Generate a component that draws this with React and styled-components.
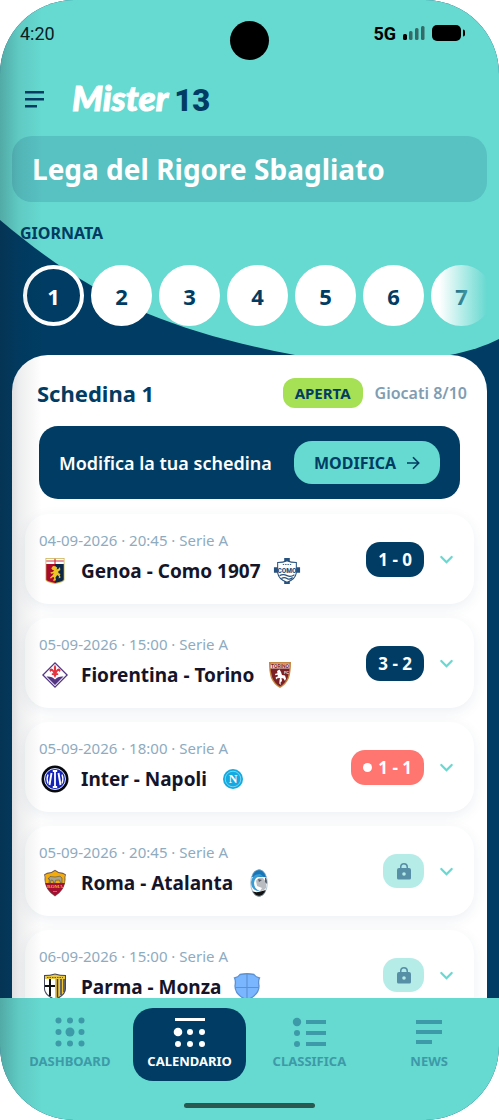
import React, { useState } from 'react';
import styled, { createGlobalStyle } from 'styled-components';

const TEAL = '#66d9d0';
const NAVY = '#003c63';
const MUTED = '#3d9aa8';

const GlobalStyle = createGlobalStyle`
	* {
		box-sizing: border-box;
	}
	body {
		margin: 0;
		background: #fff;
		font-family: 'Noto Sans', 'Open Sans', sans-serif;
	}
	button {
		font-family: inherit;
		border: 0;
		padding: 0;
		cursor: pointer;
	}
`;

const Screen = styled.div`
	position: relative;
	display: flex;
	flex-direction: column;
	height: 100vh;
	border-radius: 74px;
	overflow: hidden;
	background: ${NAVY};
	isolation: isolate;
`;

// soft shade running down the left side of the screen
const EdgeShade = styled.div`
	position: absolute;
	inset: 0 auto 0 0;
	width: 42px;
	z-index: 5;
	pointer-events: none;
	background: linear-gradient(to right, rgba(20, 30, 40, 0.25), rgba(20, 30, 40, 0.08) 45%, rgba(20, 30, 40, 0));
`;

const Backdrop = styled.svg`
	position: absolute;
	top: 0;
	left: 0;
	width: 100%;
	height: 364px;
	z-index: -1;
`;

const StatusBar = styled.div`
	position: relative;
	display: flex;
	flex: none;
	align-items: center;
	justify-content: space-between;
	height: 66px;
	padding: 0 34px 0 20px;
	font-family: Roboto, sans-serif;
	font-size: 18px;
	color: #06201f;
`;

const Camera = styled.span`
	position: absolute;
	top: 21px;
	left: 50%;
	width: 39px;
	height: 39px;
	margin-left: -20px;
	border-radius: 50%;
	background: #000;
`;

const StatusIcons = styled.div`
	display: flex;
	align-items: center;
	gap: 7px;
	color: #000;

	b {
		font-size: 18px;
		font-weight: 700;
	}
`;

const Header = styled.header`
	display: flex;
	flex: none;
	align-items: center;
	gap: 26px;
	height: 66px;
	margin-bottom: 4px;
	padding: 0 22px;
`;

const MenuButton = styled.button`
	display: flex;
	background: none;
`;

const Logo = styled.h1`
	display: flex;
	align-items: baseline;
	gap: 6px;
	margin: 0;
	font-family: Lato, sans-serif;
	font-size: 35px;
	line-height: 40px;
	font-weight: 900;
	font-style: italic;
	color: #fff;
	-webkit-text-stroke: 1px currentColor;

	span {
		font-family: 'Liberation Sans Narrow', Roboto, sans-serif;
		font-size: 31px;
		font-style: normal;
		color: ${NAVY};
		-webkit-text-stroke: 0;
	}
`;

const League = styled.h2`
	flex: none;
	margin: 0 12px;
	padding: 0 20px;
	border-radius: 20px;
	background: #58c1c2;
	color: #fff;
	font-size: 28px;
	line-height: 66px;
	font-weight: 700;
`;

const SectionLabel = styled.h3`
	flex: none;
	margin: 20px 20px 0;
	color: ${NAVY};
	font-size: 16px;
	line-height: 22px;
	font-weight: 700;
`;

const Days = styled.div`
	position: relative;
	display: flex;
	flex: none;
	gap: 7px;
	margin: 21px 12px 0;
	padding-left: 11px;
	overflow: hidden;

	&::after {
		content: '';
		position: absolute;
		inset: 0 0 0 auto;
		width: 48px;
		background: linear-gradient(to right, rgba(102, 217, 208, 0), ${TEAL});
	}
`;

const Day = styled.button`
	flex: none;
	width: 61px;
	height: 61px;
	border-radius: 50%;
	border: 4px solid #fff;
	background: ${props => (props.$active ? NAVY : '#fff')};
	color: ${props => (props.$active ? '#fff' : NAVY)};
	font-size: 22px;
	font-weight: 700;
`;

const Card = styled.main`
	display: flex;
	flex: 1;
	flex-direction: column;
	min-height: 0;
	margin: 29px 12px 0;
	padding: 23px 13px 0;
	border-radius: 36px 36px 0 0;
	background: #fff;
	overflow: hidden;
`;

const CardHeader = styled.div`
	display: flex;
	flex: none;
	align-items: center;
	gap: 12px;
	padding: 0 7px 0 12px;
	color: ${NAVY};
`;

const CardTitle = styled.h2`
	flex: 1;
	margin: 0;
	font-size: 22px;
	line-height: 30px;
	font-weight: 700;
`;

const Badge = styled.span`
	padding: 0 12px;
	border-radius: 12px;
	background: #a5e055;
	font-size: 15px;
	line-height: 30px;
	font-weight: 700;
`;

const Played = styled.span`
	color: #7f9db3;
	font-size: 16px;
	font-weight: 600;
`;

const Banner = styled.section`
	display: flex;
	flex: none;
	align-items: center;
	justify-content: space-between;
	height: 73px;
	margin: 18px 14px 0;
	padding: 0 20px;
	border-radius: 19px;
	background: ${NAVY};
	color: #fff;
	font-size: 18px;
	font-weight: 600;
`;

const EditButton = styled.button`
	display: flex;
	align-items: center;
	gap: 10px;
	height: 43px;
	padding: 0 20px;
	border-radius: 18px;
	background: ${TEAL};
	color: ${NAVY};
	font-size: 16px;
	font-weight: 700;
`;

const MatchList = styled.ul`
	display: flex;
	flex: 1;
	flex-direction: column;
	gap: 14px;
	min-height: 0;
	margin: 0 -13px;
	padding: 15px 13px;
	list-style: none;
	overflow-y: auto;
	scrollbar-width: none;
`;

const Match = styled.li`
	display: flex;
	flex: none;
	align-items: center;
	height: 90px;
	padding: 0 20px 0 14px;
	border-radius: 24px;
	background: #fff;
	box-shadow: 0 4px 14px rgba(0, 60, 99, 0.08);
`;

const MatchInfo = styled.div`
	flex: 1;
	padding-bottom: 2px;
`;

const MatchDate = styled.div`
	color: #8eabc0;
	font-size: 15px;
	line-height: 20px;
`;

const Teams = styled.div`
	display: flex;
	align-items: center;
	gap: 12px;
	margin-top: 6px;
	padding-left: 2px;
	color: #15152a;
	font-size: 19px;
	line-height: 30px;
	font-weight: 700;
	white-space: nowrap;

	svg {
		flex: none;
	}
`;

const Score = styled.span`
	display: flex;
	align-items: center;
	gap: 6px;
	height: 35px;
	padding: 0 12px;
	border-radius: 14px;
	background: ${props => (props.$live ? '#ff756f' : NAVY)};
	color: #fff;
	font-size: 17px;
	font-weight: 700;
`;

const LiveDot = styled.i`
	width: 9px;
	height: 9px;
	border-radius: 50%;
	background: #fff;
`;

const Locked = styled.span`
	display: flex;
	align-items: center;
	justify-content: center;
	width: 41px;
	height: 34px;
	border-radius: 14px;
	background: #b5ece8;
`;

const ExpandButton = styled.button`
	display: flex;
	margin-left: 15px;
	background: none;
`;

const TabBar = styled.nav`
	flex: none;
	padding: 10px 10px 12px;
	background: ${TEAL};
`;

const Tabs = styled.div`
	display: grid;
	grid-template-columns: repeat(4, 1fr);
	justify-items: center;
`;

const Tab = styled.a`
	display: flex;
	flex-direction: column;
	align-items: center;
	gap: 4px;
	width: 113px;
	height: 73px;
	padding-top: 8px;
	border-radius: 20px;
	background: ${props => (props.$active ? NAVY : 'transparent')};
	color: ${props => (props.$active ? '#fff' : MUTED)};
	font-size: 13px;
	line-height: 18px;
	font-weight: 700;
	text-decoration: none;
`;

const HomeBar = styled.div`
	width: 131px;
	height: 5px;
	margin: 22px auto 0;
	border-radius: 3px;
	background: #28584f;
`;

const MenuIcon = () => (
	<svg width="24" height="24" viewBox="0 0 24 24" fill={NAVY}>
		<path d="M3 4h19v2.500H3zM3 11h19v2.500H3zM3 18h12v2.500H3z" />
	</svg>
);

const SignalIcon = () => (
	<svg width="22" height="16" viewBox="0 0 22 16">
		<rect x="0" y="9" width="4" height="6" rx="1.500" />
		<g opacity="0.5">
			<rect x="6" y="6" width="3.500" height="9" rx="1.500" />
			<rect x="12" y="3" width="3.500" height="12" rx="1.500" />
			<rect x="18" y="1" width="3.500" height="14" rx="1.500" />
		</g>
	</svg>
);

const BatteryIcon = () => (
	<svg width="33" height="16" viewBox="0 0 33 16">
		<rect width="29" height="16" rx="5" />
		<path d="M31 4.500q2 0 2 2v3q0 2-2 2z" />
	</svg>
);

const ArrowIcon = () => (
	<svg width="14" height="14" viewBox="0 0 14 14" fill="none" stroke={NAVY} strokeWidth="1.600">
		<path d="M1 7h11.500M7 1.300 12.700 7 7 12.700" />
	</svg>
);

const ChevronIcon = () => (
	<svg width="15" height="15" viewBox="0 0 15 15" fill="none" stroke={TEAL} strokeWidth="2.200" strokeLinecap="round">
		<path d="M2.300 5 7.500 10.200 12.700 5" />
	</svg>
);

const LockIcon = () => (
	<svg width="14" height="18" viewBox="0 0 14 18" fill="#568fa6">
		<path d="M2 6H3V5a4 4 0 0 1 8 0v1h1a2 2 0 0 1 2 2v8a1.500 1.500 0 0 1-1.500 1.500h-11A1.500 1.500 0 0 1 0 16V8a2 2 0 0 1 2-2zm2.500 0h5V5a2.500 2.500 0 0 0-5 0z" />
		<circle cx="7" cy="12" r="1.800" fill="#b5ece8" />
	</svg>
);

const CREST = { width: 28, height: 28, viewBox: '0 0 28 28', 'aria-hidden': true };

const crests = {
	genoa: (
		<svg {...CREST}>
			<path d="M4.500 1h19v22q0 2-9.500 4-9.500-2-9.500-4z" fill="#cdb553" />
			<path d="M5.300 7H14v19q-8.700-2-8.700-3.500z" fill="#a80a2d" />
			<path d="M14 7h8.700v15.500Q22.700 24 14 26z" fill="#0c2748" />
			<path d="M5.300 1.800h17.400V7H5.300z" fill="#fff" />
			<path d="M5.300 4h17.400M14 1.800V7" stroke="#d52e45" strokeWidth="1.200" />
			<path d="m12 9 2.500.3 1.800 1.500-.8 1.700 2-.7 1.500-1.800.3 3-2.300 1.800.8 1.500 1.700.7-.8 1.500 1 1.800-2 1.200.3-2-1.700-1.500-1.800 2.500.5 2.700-2.500.8-.3-1.200 1-.8-.3-2-2 .5-1 1.300-.8-1.300 2.500-2.200 1.200-2-2.700.4-.8-1.200 2.600-.8 1.400-1.200-2-.7-1-1.500z" fill="#edc526" />
		</svg>
	),
	como: (
		<svg {...CREST} viewBox="-1 0 30 28">
			<path d="M11 0h6v5h-6zM0 10h28v6H0zM11 23h6v5h-6z" fill="#26517e" />
			<path d="M4 5q6 0 10-2 4 2 10 2v11q-1 7-10 10Q5 23 4 16z" fill="#fff" stroke="#26517e" strokeWidth="1.100" />
			<path d="M9.500 7h9" stroke="#26517e" strokeDasharray="1.500 1" />
			<text x="14" y="16" textAnchor="middle" fontFamily="Roboto, sans-serif" fontSize="7" fontWeight="900" fill="#26517e">COMO</text>
			<path d="M6 19q4-2 8 0t8-1M8 22q3-2 6 0t6-1" fill="none" stroke="#26517e" strokeWidth="1.300" />
		</svg>
	),
	fiorentina: (
		<svg {...CREST}>
			<path d="m14 1 13 13-13 13L1 14z" fill="#533584" />
			<path d="m14 2.800 11.200 11.200L14 25.200 2.800 14z" fill="#fff" />
			<path d="M5.500 15.500q5.500-.5 8.500 3 3-3.500 8.500-3L14 24z" fill="#533584" />
			<path d="M14 3.500q2 2.500 1 6 2-3 4-1.500 1.500 1.500-1 3.500 1-2-1-1.500l-1.500 2.300h1.700v1.700h-1.700l-1.500 3-1.500-3h-1.700v-1.700h1.700L11 10q-2-.5-1 1.500-2.500-2-1-3.500 2-1.500 4 1.500-1-3.500 1-6z" fill="#e33540" />
		</svg>
	),
	torino: (
		<svg {...CREST}>
			<path d="M3 1h22q0 10-2 16-3 7-9 10-6-3-9-10Q3 11 3 1z" fill="#c48640" />
			<path d="M4.300 2.500h19.400q0 8-2 14-2.500 6-7.700 9-5.200-3-7.700-9-2-6-2-14z" fill="#7b2025" />
			<path d="M4.500 2.500h19v5h-19z" fill="#eee2d8" />
			<text x="14" y="6.900" textAnchor="middle" fontFamily="Roboto, sans-serif" fontSize="5" fontWeight="700" fill="#7b2025">TORINO</text>
			<text x="20.500" y="13" textAnchor="middle" fontFamily="Roboto, sans-serif" fontSize="4" fontWeight="700" fill="#eee2d8">FC</text>
			<path d="m11 10 2.500-1.500 1.500 2.500 1 3 3 .5 1 3-1 2.500-1.500-2.500-2-.5.5 3-1.500 1.500.3 2.500-1.500-1.500.2-3 .5-2.500-2.500.3-1.500 1.200-.3-2.200 2.300-1-.5-1.500-2.500.5.3-1.500 2.200-.5z" fill="#fff" />
		</svg>
	),
	inter: (
		<svg {...CREST}>
			<circle cx="14" cy="14" r="13.500" fill="#08090e" />
			<circle cx="14" cy="14" r="10.500" fill="#1423b8" stroke="#dfe6ff" strokeWidth="1" />
			<path d="M11.800 6h4.400M11.800 22h4.400M14 6v16" stroke="#fff" strokeWidth="1.800" fill="none" />
			<path d="M7 9.500q-1.800 4.500 0 9M21 9.500q1.800 4.500 0 9" stroke="#fff" strokeWidth="1.300" fill="none" />
			<path d="m10.500 8-2 12M17.500 8l2 12" stroke="#fff" strokeWidth="1.900" fill="none" />
		</svg>
	),
	napoli: (
		<svg {...CREST}>
			<circle cx="14" cy="14" r="10" fill="#12aae1" />
			<circle cx="14" cy="14" r="7.800" fill="none" stroke="#78d1f0" />
			<text x="14" y="18" textAnchor="middle" fontFamily="'Liberation Serif', serif" fontSize="12" fontWeight="700" fill="#fff">N</text>
		</svg>
	),
	roma: (
		<svg {...CREST}>
			<path d="M14 .8q3 2.800 8 3l3 1.700q-1 2.500-.5 5 0 10-10.500 17Q3.500 20.500 3.500 10.500 4 8 3 5.500l3-1.700q5-.2 8-3z" fill="#715b52" />
			<path d="M14 2q3 2.700 8 3l2 1q-.7 2-.5 4.500V14h-19v-3.500Q4.700 8 4 6l2-1q5-.3 8-3z" fill="#f3ac0c" />
			<path d="M4.500 14h19Q22 22 14 26.500 6 22 4.500 14z" fill="#a40f31" />
			<path d="m7 10 2-2.500 5 .5 5-.8 2 1.800v5h-1.500l-1-3-4 .3-.5 2.700h-1.500l-.5-2.500-2-.5-.5 3H8l.5-4z" fill="#a6a392" stroke="#59533d" strokeWidth=".6" />
			<text x="14" y="19" textAnchor="middle" fontFamily="'Liberation Serif', serif" fontSize="5" fontWeight="700" fill="#f0b32b">ROMA</text>
			<path d="M12 22.500h4" stroke="#d88245" strokeWidth=".8" />
		</svg>
	),
	atalanta: (
		<svg {...CREST}>
			<clipPath id="atalanta-oval">
				<ellipse cx="14" cy="14" rx="8.500" ry="13.500" />
			</clipPath>
			<g clipPath="url(#atalanta-oval)">
				<path d="M0 0h28v28H0z" fill="#fff" />
				<path d="M0 0h28v8H0z" fill="#1676b9" />
				<path d="M0 28V18q8 6 13 5l12-3v8z" fill="#111" />
				<path d="M19 8q-9-2-10 6 0 6 6 8-9 0-9-9 1-8 9-8z" fill="#3b9bd2" />
				<path d="M11 12q2-4 7-3l3 4v6q-3 4-6 3l2-3-5-2z" fill="#b9bdc2" />
				<path d="M20 8q3 3 2 7l-2-2zM13 10l4 1-3 2z" fill="#555d66" />
			</g>
			<ellipse cx="14" cy="14" rx="8.300" ry="13.300" fill="none" stroke="#8ba9bd" strokeWidth=".7" />
		</svg>
	),
	parma: (
		<svg {...CREST}>
			<path d="M3 2q6 0 11-1.500Q19 2 25 2v14q0 6-11 11.500Q3 22 3 16z" fill="#44465c" />
			<path d="M4 6h10v20Q4 21 4 16z" fill="#fff" />
			<path d="M4 13h10M9 6v17" stroke="#111" strokeWidth="2" />
			<path d="M14 6h10v10q0 5-10 10z" fill="#f0c435" />
			<path d="M16.500 6v18.500M20 6v16M23 6v13" stroke="#283d7c" strokeWidth="1.400" />
			<path d="M4 3q5 0 10-1.500Q19 3 24 3v3H4z" fill="#e9c63f" />
			<path d="M6 4.500h16" stroke="#5f5b45" strokeDasharray="1.500 1" />
		</svg>
	),
	monza: (
		<svg {...CREST}>
			<path d="M7 1.500q7-1.500 14 0 1.500 2.500 5.500 3.500-1.500 3-.5 8 0 9-12 14Q2 22 2 13q1-5-.5-8Q5.500 4 7 1.500z" fill="#7ab6ff" stroke="#5b90d2" strokeWidth="1.300" />
			<path d="M14 1v26M2 14.500h24" stroke="#5b90d2" strokeWidth="1.100" />
		</svg>
	)
};

const DashboardIcon = () => (
	<svg width="32" height="32" viewBox="0 0 32 32" fill="currentColor">
		{[ 4.5, 16, 27.5 ].map(y => [ 4.5, 16, 27.5 ].map(x => <circle key={`${x}-${y}`} cx={x} cy={y} r={x === 16 && y === 16 ? 4.5 : 3} />))}
	</svg>
);

const CalendarIcon = () => (
	<svg width="34" height="32" viewBox="0 0 34 32" fill="currentColor">
		<path d="M2 2h30v3H2z" />
		<circle cx="5" cy="16" r="4.300" />
		{[ [ 17, 16 ], [ 29, 16 ], [ 5, 28 ], [ 17, 28 ], [ 29, 28 ] ].map(([ x, y ]) => <circle key={`${x}-${y}`} cx={x} cy={y} r="3" />)}
	</svg>
);

const RankingIcon = () => (
	<svg width="34" height="32" viewBox="0 0 34 32" fill="currentColor">
		<circle cx="5" cy="6" r="4.200" />
		<circle cx="5" cy="17" r="3" />
		<circle cx="5" cy="28" r="3" />
		<path d="M14 4h20v4H14zM14 15h20v4H14zM14 26h20v4H14z" />
	</svg>
);

const NewsIcon = () => (
	<svg width="26" height="32" viewBox="0 0 26 32" fill="currentColor">
		<path d="M0 4h26v4H0zM0 14h26v4H0zM0 24h16v4H0z" />
	</svg>
);

const days = [ 1, 2, 3, 4, 5, 6, 7 ];

const matches = [
	{ date: '04-09-2026 · 20:45', home: 'Genoa', away: 'Como 1907', crest: [ 'genoa', 'como' ], score: '1 - 0' },
	{ date: '05-09-2026 · 15:00', home: 'Fiorentina', away: 'Torino', crest: [ 'fiorentina', 'torino' ], score: '3 - 2' },
	{ date: '05-09-2026 · 18:00', home: 'Inter', away: 'Napoli', crest: [ 'inter', 'napoli' ], score: '1 - 1', live: true },
	{ date: '05-09-2026 · 20:45', home: 'Roma', away: 'Atalanta', crest: [ 'roma', 'atalanta' ] },
	{ date: '06-09-2026 · 15:00', home: 'Parma', away: 'Monza', crest: [ 'parma', 'monza' ] }
];

const tabs = [
	{ id: 'dashboard', label: 'DASHBOARD', Icon: DashboardIcon },
	{ id: 'calendario', label: 'CALENDARIO', Icon: CalendarIcon },
	{ id: 'classifica', label: 'CLASSIFICA', Icon: RankingIcon },
	{ id: 'news', label: 'NEWS', Icon: NewsIcon }
];

const MatchRow = ({ date, home, away, crest, score, live }) => (
	<Match>
		<MatchInfo>
			<MatchDate>{date} · Serie A</MatchDate>
			<Teams>
				{crests[crest[0]]}
				<span>
					{home} - {away}
				</span>
				{crests[crest[1]]}
			</Teams>
		</MatchInfo>
		{score ? (
			<Score $live={live}>
				{live && <LiveDot />}
				{score}
			</Score>
		) : (
			<Locked>
				<LockIcon />
			</Locked>
		)}
		<ExpandButton aria-label={`${home} - ${away}`}>
			<ChevronIcon />
		</ExpandButton>
	</Match>
);

const App = () => {
	const [ day, setDay ] = useState(1);

	return (
		<Screen>
			<GlobalStyle />
			<Backdrop viewBox="0 0 499 364" preserveAspectRatio="none">
				<path
					d="M0 0H499V339C485 346 470 351 450 355C400 364 350 362 295 355C240 345 190 331 146 313C90 289 45 258 0 220z"
					fill={TEAL}
				/>
			</Backdrop>
			<StatusBar>
				<span>4:20</span>
				<Camera />
				<StatusIcons>
					<b>5G</b>
					<SignalIcon />
					<BatteryIcon />
				</StatusIcons>
			</StatusBar>
			<Header>
				<MenuButton aria-label="Menu">
					<MenuIcon />
				</MenuButton>
				<Logo>
					Mister <span>13</span>
				</Logo>
			</Header>
			<League>Lega del Rigore Sbagliato</League>
			<SectionLabel>GIORNATA</SectionLabel>
			<Days>
				{days.map(n => (
					<Day key={n} $active={n === day} onClick={() => setDay(n)}>
						{n}
					</Day>
				))}
			</Days>
			<Card>
				<CardHeader>
					<CardTitle>Schedina {day}</CardTitle>
					<Badge>APERTA</Badge>
					<Played>Giocati 8/10</Played>
				</CardHeader>
				<Banner>
					Modifica la tua schedina
					<EditButton>
						MODIFICA
						<ArrowIcon />
					</EditButton>
				</Banner>
				<MatchList>{matches.map(match => <MatchRow key={match.home} {...match} />)}</MatchList>
			</Card>
			<TabBar>
				<Tabs>
					{tabs.map(({ id, label, Icon }) => (
						<Tab key={id} href={`#${id}`} $active={id === 'calendario'}>
							<Icon />
							{label}
						</Tab>
					))}
				</Tabs>
				<HomeBar />
			</TabBar>
			<EdgeShade />
		</Screen>
	);
};

export default App;
